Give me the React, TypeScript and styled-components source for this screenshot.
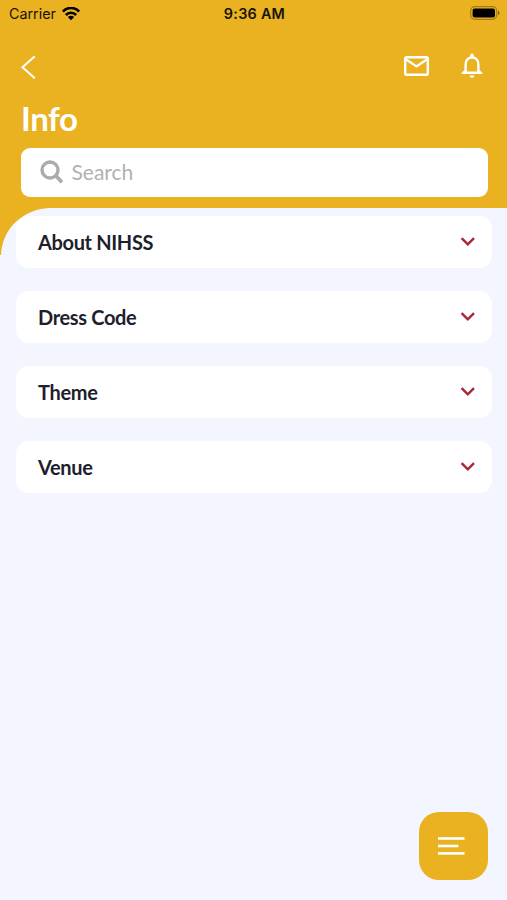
import React from "react";
import styled, { createGlobalStyle } from "styled-components";

const GlobalStyle = createGlobalStyle`
  * { box-sizing: border-box; }
  body { margin: 0; background: #f3f6ff; }
  button, input { font: inherit; border: 0; background: none; padding: 0; margin: 0; }
  svg { display: block; }
`;

const Screen = styled.div`
  display: flex;
  flex-direction: column;
  height: 900px;
  width: 507px;
  overflow: hidden;
  background: linear-gradient(#eab220 0 255px, #f3f6ff 255px);
  font-family: Lato, sans-serif;
`;

const StatusBar = styled.div`
  display: grid;
  grid-template-columns: 1fr auto 1fr;
  align-items: center;
  height: 27px;
  padding: 0 7px 0 9px;
  font-family: Inter, sans-serif;
  font-size: 14.3px;
  color: #171306;
`;

const Carrier = styled.div`
  display: flex;
  align-items: center;
  gap: 6px;
`;

const Clock = styled.div`
  font-weight: 600;
  font-size: 14.4px;
  letter-spacing: 0.25px;
`;

const BatterySlot = styled.div`
  display: flex;
  justify-content: flex-end;
  padding-bottom: 1px;
`;

const NavBar = styled.header`
  display: flex;
  align-items: center;
  justify-content: space-between;
  height: 76px;
  padding: 2px 24px 0 20px;
  color: #fff;
`;

const NavActions = styled.div`
  display: flex;
  align-items: center;
  gap: 32px;
`;

const IconButton = styled.button`
  display: flex;
  color: #fff;
`;

const BackButton = styled(IconButton)`
  padding-top: 2px;
`;

const Title = styled.h1`
  margin: 0 0 0 21px;
  height: 45px;
  font-size: 33px;
  line-height: 31px;
  font-weight: 700;
  letter-spacing: -0.4px;
  color: #fff;
`;

const SearchBox = styled.label`
  display: flex;
  align-items: center;
  gap: 8px;
  height: 49px;
  margin: 0 19.5px 0 20.5px;
  padding: 0 19px 2px;
  border-radius: 9px;
  background: #fff;
  flex-shrink: 0;
`;

const SearchInput = styled.input`
  flex: 1;
  min-width: 0;
  outline: none;
  font-size: 21px;
  color: #222;
  &::placeholder { color: #b1b1b1; opacity: 1; }
`;

const Sheet = styled.main`
  display: flex;
  flex-direction: column;
  flex: 1;
  gap: 22.5px;
  margin: 11px 0 0 1px;
  padding: 7.5px 15px 0;
  overflow: hidden;
  border-top-left-radius: 50px 48px;
  background: #f3f6ff;
`;

const Card = styled.button`
  display: flex;
  align-items: center;
  justify-content: space-between;
  height: 52.5px;
  padding: 0 16px 0 22px;
  border-radius: 13px;
  background: #fff;
  font-size: 20px;
  font-weight: 700;
  letter-spacing: -0.35px;
  color: #1e1e2d;
`;

const Fab = styled.button`
  position: fixed;
  left: 419px;
  top: 812px;
  display: flex;
  align-items: center;
  justify-content: center;
  width: 68.5px;
  height: 68px;
  border-radius: 20px;
  background: #eab220;
`;

const Wifi = () => (
  <svg width="18" height="14" viewBox="0 0 18 14" fill="none" stroke="#000" strokeWidth="2.7">
    <path d="M.9 4.6C5.4-.2 12.6-.2 17.1 4.6" />
    <path d="M3.8 8C6.8 5 11.2 5 14.2 8" />
    <path d="M9 13.2 5.8 10Q9 7.5 12.2 10Z" fill="#000" stroke="none" />
  </svg>
);

const Battery = () => (
  <svg width="30" height="14" viewBox="0 0 30 14">
    <rect x=".7" y=".7" width="26" height="12.6" rx="4" fill="none" stroke="#a57c14" strokeWidth="1.2" />
    <rect x="2.6" y="2.5" width="22.4" height="9" rx="2" fill="#000" />
    <path d="M28 4.6q3 2.4 0 4.8z" fill="#806010" />
  </svg>
);

const Back = () => (
  <svg width="17" height="24" viewBox="0 0 17 24" fill="none" stroke="#fff" strokeWidth="2">
    <path d="M14.8 1.2 2.5 12.2 14.8 23.2" />
  </svg>
);

const Mail = () => (
  <svg width="25" height="20" viewBox="0 0 25 20" fill="none" stroke="#fff" strokeWidth="2.4">
    <rect x="1.2" y="1.2" width="22.6" height="17.6" rx="1.6" />
    <path d="m1.8 3.2 10.7 7.2 10.7-7.2" />
  </svg>
);

const Bell = () => (
  <svg width="22" height="26" viewBox="0 0 22 26" fill="none">
    <path
      d="M4.6 18.8V11.4C4.6 7 7.3 4.5 11 4.5s6.4 2.5 6.4 6.9v7.4"
      stroke="#fff"
      strokeWidth="2.4"
    />
    <path d="M.7 20.9v-1.3l2.7-2.4h2.4v1.3h10.4v-1.3h2.4l2.7 2.4v1.3Z" fill="#fff" />
    <path d="M9.2 4V2.4a1.8 1.8 0 0 1 3.6 0V4zM8.5 22.4h5a2.5 2.4 0 0 1-5 0z" fill="#fff" />
  </svg>
);

const Magnifier = () => (
  <svg width="24" height="24" viewBox="0 0 24 24" fill="none" stroke="#ababab" strokeWidth="3.4">
    <circle cx="10" cy="10" r="8" />
    <path d="m15.8 15.8 6.2 6.4" strokeWidth="3.8" />
  </svg>
);

const Chevron = () => (
  <svg width="16" height="10" viewBox="0 0 16 10" fill="none" stroke="#ac2639" strokeWidth="2.5">
    <path d="m1.6 1.2 6.2 6.1L14 1.2" />
  </svg>
);

const MenuLines = () => (
  <svg width="31" height="18" viewBox="0 0 31 18" fill="#fff">
    <rect width="26.5" height="2.6" y=".2" />
    <rect width="20.3" height="2.6" y="7.7" />
    <rect width="26.5" height="2.6" y="15.1" />
  </svg>
);

const sections = ["About NIHSS", "Dress Code", "Theme", "Venue"];

export default function App() {
  return (
    <Screen>
      <GlobalStyle />
      <StatusBar>
        <Carrier>Carrier<Wifi /></Carrier>
        <Clock>9:36 AM</Clock>
        <BatterySlot><Battery /></BatterySlot>
      </StatusBar>
      <NavBar>
        <BackButton aria-label="Back"><Back /></BackButton>
        <NavActions>
          <IconButton aria-label="Messages"><Mail /></IconButton>
          <IconButton aria-label="Notifications"><Bell /></IconButton>
        </NavActions>
      </NavBar>
      <Title>Info</Title>
      <SearchBox>
        <Magnifier />
        <SearchInput placeholder="Search" />
      </SearchBox>
      <Sheet>
        {sections.map((label) => (
          <Card key={label}>{label}<Chevron /></Card>
        ))}
      </Sheet>
      <Fab aria-label="Menu"><MenuLines /></Fab>
    </Screen>
  );
}
